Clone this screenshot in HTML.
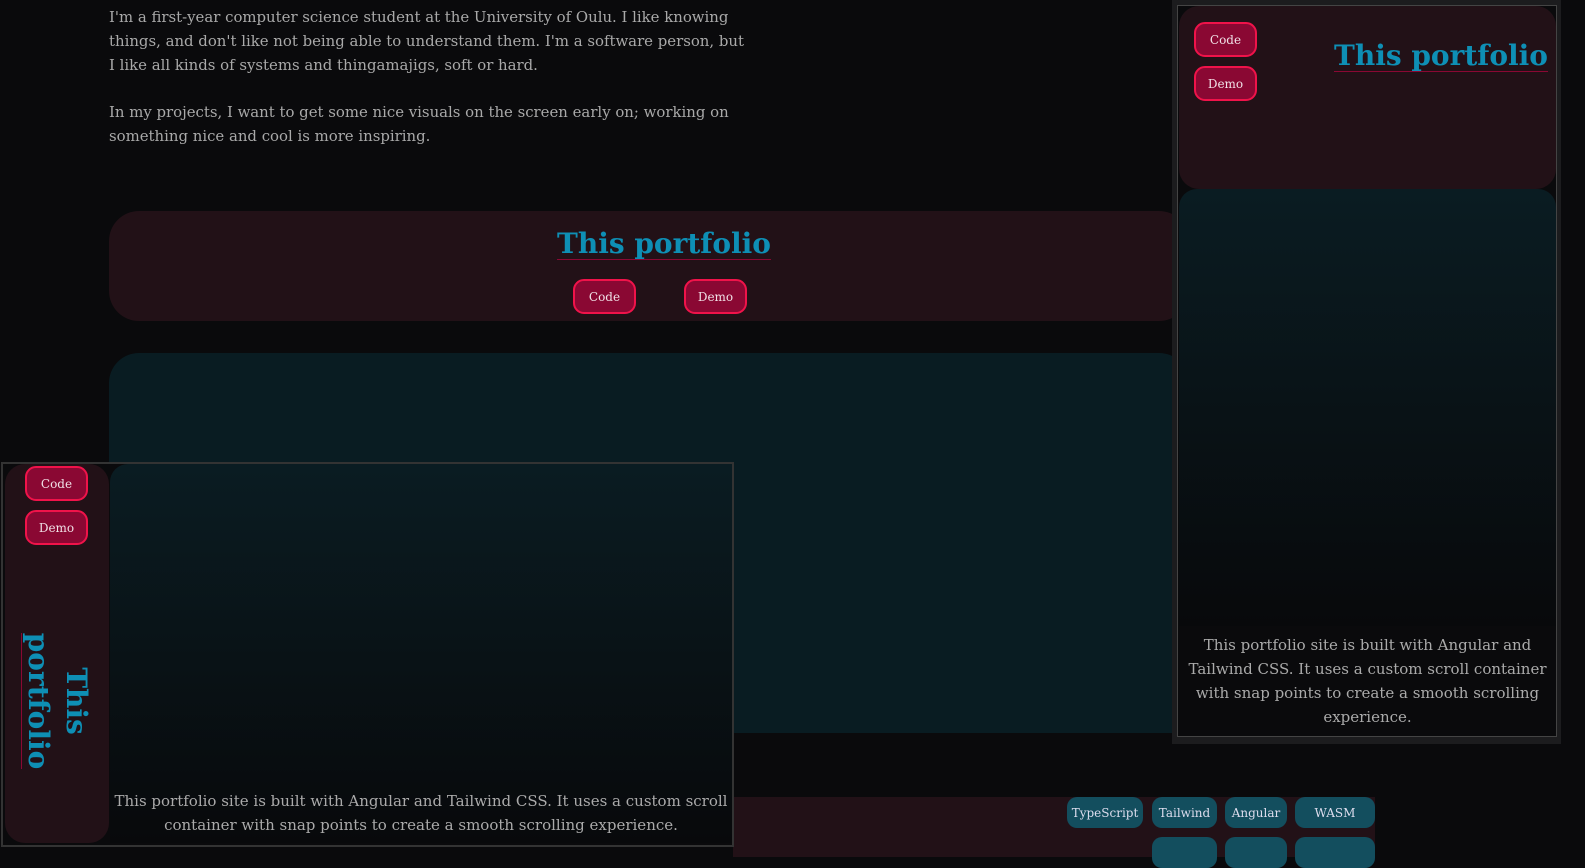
<!DOCTYPE html>
<html><head><style>
*{margin:0;padding:0;box-sizing:border-box}
body{width:1585px;height:856px;overflow:hidden;background:#0a0a0c;font-family:"DejaVu Serif","Liberation Serif",serif;color:#a8a8a8;position:relative}
.abs{position:absolute}
.p{left:109px;font-size:14.9px;line-height:23.8px;white-space:nowrap;color:#a9a9a9}
.pink{background:#221117}
.btn{position:absolute;width:63px;height:35px;border:2px solid #f0134a;background:#8a0833;border-radius:11px;color:#f0e0e6;font-size:12px;display:flex;align-items:center;justify-content:center}
.title{color:#0e8fb5;font-weight:bold;font-size:28px;white-space:nowrap;border-bottom:1px solid #8a0833;line-height:31px}
.tag{position:absolute;height:31px;background:#134e5e;border-radius:10px;color:#dde;font-size:12px;display:flex;align-items:center;justify-content:center}
.grad{background:linear-gradient(#0a1c22,#08090b)}
.desc{font-size:15px;line-height:24px;text-align:center;color:#aaa}
</style></head><body>
<div class="abs p" style="top:6px">I'm a first-year computer science student at the University of Oulu. I like knowing<br>things, and don't like not being able to understand them. I'm a software person, but<br>I like all kinds of systems and thingamajigs, soft or hard.<br><br>In my projects, I want to get some nice visuals on the screen early on; working on<br>something nice and cool is more inspiring.</div>

<div class="abs pink" style="left:109px;top:211px;width:1080px;height:110px;border-radius:30px"></div>
<div class="abs title" style="left:557px;top:228px">This portfolio</div>
<div class="btn" style="left:573px;top:279px">Code</div>
<div class="btn" style="left:684px;top:279px">Demo</div>

<div class="abs" style="left:109px;top:353px;width:1080px;height:380px;border-radius:30px 30px 0 0;background:#091c22"></div>

<div class="abs pink" style="left:733px;top:797px;width:642px;height:60px"></div>
<div class="tag" style="left:1067px;top:797px;width:76px">TypeScript</div>
<div class="tag" style="left:1152px;top:797px;width:65px">Tailwind</div>
<div class="tag" style="left:1225px;top:797px;width:62px">Angular</div>
<div class="tag" style="left:1295px;top:797px;width:80px">WASM</div>
<div class="tag" style="left:1152px;top:837px;width:65px"></div>
<div class="tag" style="left:1225px;top:837px;width:62px"></div>
<div class="tag" style="left:1295px;top:837px;width:80px"></div>

<!-- bottom-left overlay -->
<div class="abs" style="left:1px;top:462px;width:733px;height:385px;border:2px solid #333;background:#0a0a0c">
  <div class="abs pink" style="left:2px;top:0;width:104px;height:379px;border-radius:20px"></div>
  <div class="btn" style="left:22px;top:2px">Code</div>
  <div class="btn" style="left:22px;top:46px">Demo</div>
  <div class="abs" style="left:92px;top:162px;transform:rotate(90deg);transform-origin:0 0;color:#0e8fb5;font-weight:bold;font-size:28px;line-height:38px;text-align:center;width:150px">This<br><span style="border-bottom:1px solid #8a0833">portfolio</span></div>
  <div class="abs grad" style="left:107px;top:0;width:622px;height:379px;border-radius:18px 0 0 0"></div>
  <div class="abs desc" style="left:107px;top:325px;width:622px">This portfolio site is built with Angular and Tailwind CSS. It uses a custom scroll<br>container with snap points to create a smooth scrolling experience.</div>
</div>

<!-- right overlay -->
<div class="abs" style="left:1172px;top:0;width:389px;height:744px;background:#1c1c1e"></div>
<div class="abs" style="left:1177px;top:5px;width:380px;height:732px;border:1px solid #444;background:#0a0a0c">
  <div class="abs pink" style="left:1px;top:0;width:377px;height:183px;border-radius:20px"></div>
  <div class="btn" style="left:16px;top:16px">Code</div>
  <div class="btn" style="left:16px;top:60px">Demo</div>
  <div class="abs title" style="left:156px;top:34px">This portfolio</div>
  <div class="abs grad" style="left:1px;top:183px;width:377px;height:437px;border-radius:18px 18px 0 0"></div>
  <div class="abs desc" style="left:1px;top:627px;width:377px">This portfolio site is built with Angular and<br>Tailwind CSS. It uses a custom scroll container<br>with snap points to create a smooth scrolling<br>experience.</div>
</div>
</body></html>
